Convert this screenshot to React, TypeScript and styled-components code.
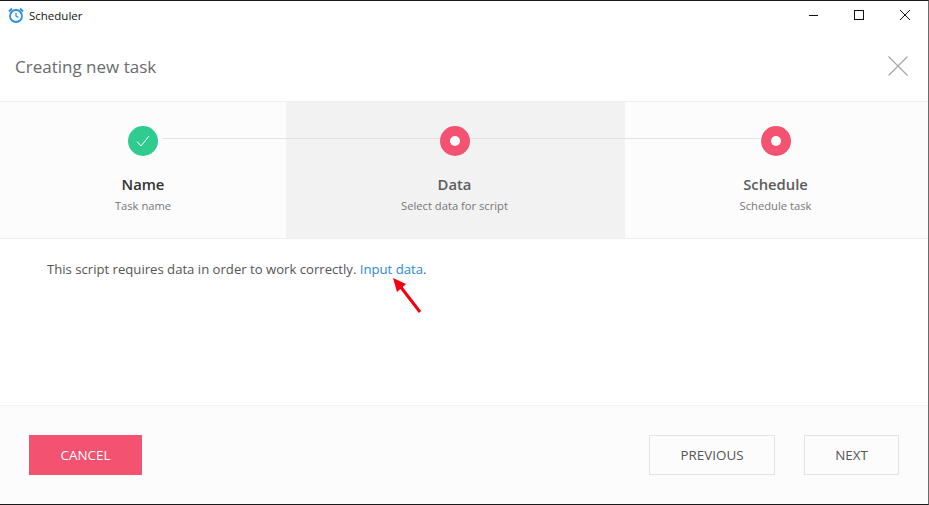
import React from 'react';
import styled, { createGlobalStyle } from 'styled-components';

const GlobalStyle = createGlobalStyle`
  html, body {
    margin: 0;
    padding: 0;
    background: #fff;
  }
  * {
    box-sizing: border-box;
  }
`;

const Window = styled.div`
  position: relative;
  width: 929px;
  height: 505px;
  display: flex;
  flex-direction: column;
  background: #fff;
  border-top: 1px solid #1a1a1a;
  border-right: 1px solid #6b6b6b;
  border-bottom: 1px solid #1a1a1a;
  font-family: 'Open Sans', 'Noto Sans', sans-serif;
  overflow: hidden;
`;

const TitleBar = styled.div`
  height: 29px;
  display: flex;
  align-items: center;
  padding: 0 0 1px 8px;
  flex: none;
`;

const AppName = styled.span`
  margin-left: 5px;
  font-size: 11.5px;
  color: #111;
`;

const WindowControls = styled.div`
  margin-left: auto;
  display: flex;
  height: 100%;
`;

const WindowControl = styled.div`
  width: 46px;
  display: flex;
  align-items: center;
  justify-content: center;
`;

const Header = styled.div`
  height: 72px;
  flex: none;
  display: flex;
  align-items: center;
  justify-content: space-between;
  padding: 1px 20px 0 15px;
  border-bottom: 1px solid #efefef;
`;

const Heading = styled.h1`
  margin: 0;
  font-size: 17px;
  font-weight: 400;
  color: #6b6b6b;
`;

const Steps = styled.div`
  position: relative;
  height: 137px;
  flex: none;
  display: grid;
  grid-template-columns: 286px 339px 1fr;
  background: #fcfcfc;
  border-bottom: 1px solid #efefef;
`;

const Step = styled.div<{ $active?: boolean; $nudge?: boolean }>`
  display: flex;
  flex-direction: column;
  align-items: center;
  padding-top: 24px;
  padding-right: ${(p) => (p.$nudge ? '2px' : '0')};
  background: ${(p) => (p.$active ? '#f2f2f2' : 'transparent')};
`;

const Connector = styled.div`
  position: absolute;
  top: 36px;
  left: 163px;
  width: 612px;
  height: 1px;
  background: #e2e2e2;
`;

const Dot = styled.div<{ $done?: boolean }>`
  position: relative;
  z-index: 1;
  width: 30px;
  height: 30px;
  border-radius: 50%;
  display: flex;
  align-items: center;
  justify-content: center;
  background: ${(p) => (p.$done ? '#2ecc8f' : '#f35271')};
`;

const DotCenter = styled.div`
  width: 10px;
  height: 10px;
  border-radius: 50%;
  background: #fff;
`;

const StepTitle = styled.div<{ $done?: boolean }>`
  margin-top: 18px;
  font-size: 14.8px;
  line-height: 20px;
  font-weight: 600;
  color: ${(p) => (p.$done ? '#333' : '#5c5c5c')};
`;

const StepHint = styled.div`
  margin-top: 4px;
  font-size: 11.2px;
  line-height: 15px;
  color: #777;
`;

const Content = styled.div`
  position: relative;
  flex: 1;
  padding: 21px 47px;
  font-size: 13.13px;
  line-height: 18px;
  color: #555;
`;

const InputLink = styled.a`
  color: #2a8ae0;
  text-decoration: none;
`;

const Arrow = styled.svg`
  position: absolute;
  left: 391px;
  top: 37px;
`;

const Footer = styled.div`
  height: 99px;
  flex: none;
  display: flex;
  align-items: center;
  padding: 0 29px;
  background: #fcfcfc;
  border-top: 1px solid #f2f2f2;
`;

const CancelButton = styled.button`
  width: 113px;
  height: 40px;
  border: none;
  background: #f35271;
  color: #fff;
  font: inherit;
  font-size: 13.4px;
  padding: 0;
`;

const NavGroup = styled.div`
  margin-left: auto;
  display: flex;
  gap: 29px;
`;

const NavButton = styled.button<{ $wide?: boolean }>`
  width: ${(p) => (p.$wide ? '126px' : '95px')};
  height: 40px;
  border: 1px solid #e3e3e3;
  background: transparent;
  color: #555;
  font: inherit;
  font-size: 13.4px;
  padding: 0;
`;

const App = () => (
  <>
    <GlobalStyle />
    <Window>
      <TitleBar>
        <svg width="16" height="16" viewBox="0 0 16 16" fill="none" stroke="#2b8fe3">
          <circle cx="8" cy="9" r="6" strokeWidth="1.8" />
          <path d="M8 5.5V9l2.5 1.5" strokeWidth="1.2" />
          <path d="M1 4.5 4 1.5M15 4.5 12 1.5" strokeWidth="1.8" />
        </svg>
        <AppName>Scheduler</AppName>
        <WindowControls>
          <WindowControl>
            <svg width="10" height="10" viewBox="0 0 10 10" stroke="#111" fill="none">
              <path d="M1 5.5h9" />
            </svg>
          </WindowControl>
          <WindowControl>
            <svg width="10" height="10" viewBox="0 0 10 10" stroke="#111" fill="none">
              <rect x="0.5" y="0.5" width="9" height="9" />
            </svg>
          </WindowControl>
          <WindowControl>
            <svg width="10" height="10" viewBox="0 0 10 10" stroke="#111" fill="none">
              <path d="M0 0l10 10M10 0 0 10" />
            </svg>
          </WindowControl>
        </WindowControls>
      </TitleBar>
      <Header>
        <Heading>Creating new task</Heading>
        <svg width="20" height="20" viewBox="0 0 20 20" stroke="#a6a6a6" fill="none" strokeWidth="1.2">
          <path d="M0.5 0.5l19 19M19.5 0.5l-19 19" />
        </svg>
      </Header>
      <Steps>
        <Connector />
        <Step>
          <Dot $done>
            <svg width="14" height="14" viewBox="0 0 14 14" stroke="#fff" fill="none">
              <path d="M1 7.5 5 12 13 2" />
            </svg>
          </Dot>
          <StepTitle $done>Name</StepTitle>
          <StepHint>Task name</StepHint>
        </Step>
        <Step $active $nudge>
          <Dot>
            <DotCenter />
          </Dot>
          <StepTitle>Data</StepTitle>
          <StepHint>Select data for script</StepHint>
        </Step>
        <Step $nudge>
          <Dot>
            <DotCenter />
          </Dot>
          <StepTitle>Schedule</StepTitle>
          <StepHint>Schedule task</StepHint>
        </Step>
      </Steps>
      <Content>
        This script requires data in order to work correctly. <InputLink>Input data</InputLink>.
        <Arrow width="36" height="40" viewBox="0 0 36 40">
          <path d="M29 36 9 10" stroke="#f5000f" strokeWidth="3" />
          <path d="M2 2 15 8 6 16Z" fill="#f5000f" />
        </Arrow>
      </Content>
      <Footer>
        <CancelButton>CANCEL</CancelButton>
        <NavGroup>
          <NavButton $wide>PREVIOUS</NavButton>
          <NavButton>NEXT</NavButton>
        </NavGroup>
      </Footer>
    </Window>
  </>
);

export default App;
